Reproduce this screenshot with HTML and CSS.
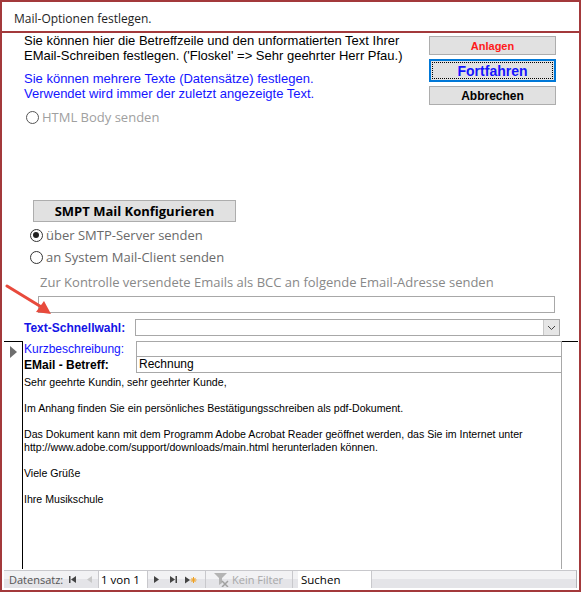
FILE: index.html
```html
<!DOCTYPE html>
<html lang="de">

<head>
    <meta charset="UTF-8">
    <title>Mail-Optionen festlegen.</title>
    <link rel="stylesheet" href="styles.css">
</head>

<body>
    <div class="window">
        <div class="titlebar">Mail-Optionen festlegen.</div>

        <div class="content">
            <div class="top">
                <div class="intro">
                    <p class="info">Sie können hier die Betreffzeile und den unformatierten Text Ihrer<br>EMail-Schreiben festlegen. ('Floskel' =&gt; Sehr geehrter Herr Pfau.)</p>
                    <p class="info blue">Sie können mehrere Texte (Datensätze) festlegen.<br>Verwendet wird immer der zuletzt angezeigte Text.</p>
                    <label class="radio light"><span class="dot"></span>HTML Body senden</label>
                </div>
                <div class="actions">
                    <button class="btn red">Anlagen</button>
                    <button class="btn focus">Fortfahren</button>
                    <button class="btn">Abbrechen</button>
                </div>
            </div>

            <button class="btn-smtp">SMPT Mail Konfigurieren</button>
            <label class="radio"><span class="dot checked"></span>über SMTP-Server senden</label>
            <label class="radio"><span class="dot"></span>an System Mail-Client senden</label>
            <div class="bcc-label">Zur Kontrolle versendete Emails als BCC an folgende Email-Adresse senden</div>
            <div class="bcc-input"></div>

            <div class="quick">
                <span class="quick-label">Text-Schnellwahl:</span>
                <div class="combo">
                    <span class="combo-btn">
                        <svg width="9" height="6" viewBox="0 0 9 6"><path d="M1 1 L4.5 4.5 L8 1" fill="none" stroke="#444" stroke-width="1"/></svg>
                    </span>
                </div>
            </div>
        </div>

        <div class="subform">
            <div class="selector"><span class="current"></span></div>
            <div class="detail">
                <div class="field">
                    <span class="field-label blue-label">Kurzbeschreibung:</span>
                    <div class="field-box"></div>
                </div>
                <div class="field joined">
                    <span class="field-label bold-label">EMail - Betreff:</span>
                    <div class="field-box">Rechnung</div>
                </div>
                <div class="mailtext">
                    <p>Sehr geehrte Kundin, sehr geehrter Kunde,</p>
                    <p>Im Anhang finden Sie ein persönliches Bestätigungsschreiben als pdf-Dokument.</p>
                    <p>Das Dokument kann mit dem Programm Adobe Acrobat Reader geöffnet werden, das Sie im Internet unter<br>http://www.adobe.com/support/downloads/main.html herunterladen können.</p>
                    <p>Viele Grüße</p>
                    <p>Ihre Musikschule</p>
                </div>
            </div>
            <div class="scroll-gap"></div>
        </div>

        <div class="navbar">
            <span class="nav-label">Datensatz:</span>
            <span class="nav-btn">
                <svg width="7" height="7" viewBox="0 0 7 7"><rect x="0" y="0" width="1.5" height="7" fill="#444"/><path d="M7 0 L2 3.5 L7 7 Z" fill="#444"/></svg>
            </span>
            <span class="nav-btn">
                <svg width="5" height="7" viewBox="0 0 5 7"><path d="M5 0 L0 3.5 L5 7 Z" fill="#c8c8c8"/></svg>
            </span>
            <span class="nav-pos">1 von 1</span>
            <span class="nav-btn">
                <svg width="5" height="7" viewBox="0 0 5 7"><path d="M0 0 L5 3.5 L0 7 Z" fill="#444"/></svg>
            </span>
            <span class="nav-btn">
                <svg width="7" height="7" viewBox="0 0 7 7"><path d="M0 0 L5 3.5 L0 7 Z" fill="#444"/><rect x="5.5" y="0" width="1.5" height="7" fill="#444"/></svg>
            </span>
            <span class="nav-btn wide">
                <svg width="12" height="8" viewBox="0 0 12 8"><path d="M0 0.5 L5 4 L0 7.5 Z" fill="#444"/><path d="M8.5 1 V7 M5.5 4 H11.5 M6.4 1.9 L10.6 6.1 M10.6 1.9 L6.4 6.1" stroke="#f0a020" stroke-width="1"/></svg>
            </span>
            <span class="nav-sep"></span>
            <span class="nav-filter">
                <svg width="15" height="14" viewBox="0 0 15 14"><path d="M0 0 H13 L8 5 V10 L5 12 V5 Z" fill="#b4b4b4"/><path d="M8 8 L14 14 M14 8 L8 14" stroke="#a0a0a0" stroke-width="1.5"/></svg>
                Kein Filter
            </span>
            <span class="nav-sep"></span>
            <span class="nav-search">Suchen</span>
        </div>

        <svg class="arrow" width="52" height="36" viewBox="0 0 52 36">
            <line x1="2" y1="3" x2="38" y2="25" stroke="#e84a3c" stroke-width="3" stroke-linecap="round"/>
            <path d="M46 31 L31 29 L39 18 Z" fill="#e84a3c"/>
        </svg>
    </div>
</body>

</html>
```

FILE: styles.css
```css
* {
    box-sizing: border-box;
    margin: 0;
    padding: 0;
}

body {
    margin: 0;
    background-color: #fff;
    font-family: "Liberation Sans", Arial, sans-serif;
}

.window {
    position: relative;
    width: 581px;
    height: 592px;
    border: 2px solid #a3393b;
    display: flex;
    flex-direction: column;
    background-color: #fff;
}

.titlebar {
    height: 31px;
    padding: 8px 0 0 12px;
    font-family: "Open Sans", sans-serif;
    font-size: 12px;
    color: #1e1e1e;
    border-bottom: 2px solid #a3393b;
}

.content {
    padding-left: 22px;
}

.top {
    display: flex;
    height: 167px;
}

.intro {
    flex: 1;
}

.info {
    font-size: 13px;
    line-height: 15px;
    color: #000;
}

.info.blue {
    color: #1414ff;
    margin-top: 8px;
}

.radio {
    display: flex;
    align-items: center;
    font-family: "Open Sans", sans-serif;
    font-size: 13px;
    color: #6a6a6a;
    height: 22px;
    margin-left: 6px;
}

.radio.light {
    color: #a0a0a0;
    margin-left: 2px;
    margin-top: 5px;
}

.dot {
    width: 13px;
    height: 13px;
    border: 1.5px solid #333;
    border-radius: 50%;
    margin-right: 3px;
    position: relative;
}

.radio.light .dot {
    border-color: #555;
}

.dot.checked::after {
    content: "";
    position: absolute;
    left: 2px;
    top: 2px;
    width: 6px;
    height: 6px;
    border-radius: 50%;
    background-color: #222;
}

.actions {
    width: 127px;
    margin-right: 23px;
    padding-top: 3px;
    display: flex;
    flex-direction: column;
    gap: 4px;
}

.btn {
    height: 19px;
    background-color: #e1e1e1;
    border: 1px solid #adadad;
    font-family: "Liberation Sans", Arial, sans-serif;
    font-weight: bold;
    font-size: 12px;
    color: #000;
}

.btn.red {
    color: #ff1a1a;
    font-size: 11px;
}

.btn.focus {
    height: 23px;
    border: 2px solid #0078d7;
    color: #1414ff;
    font-size: 14px;
    outline: 1px dotted #000;
    outline-offset: -4px;
}

.btn-smtp {
    display: block;
    width: 203px;
    height: 22px;
    margin-left: 9px;
    background-color: #e1e1e1;
    border: 1px solid #adadad;
    font-family: "Open Sans", sans-serif;
    font-weight: bold;
    font-size: 13px;
    color: #000;
}

.btn-smtp + .radio {
    margin-top: 2px;
}

.bcc-label {
    font-family: "Open Sans", sans-serif;
    font-size: 13px;
    color: #888;
    margin: 5px 0 0 16px;
    height: 23px;
}

.bcc-input {
    width: 517px;
    height: 17px;
    margin-left: 14px;
    border: 1px solid #a8a8a8;
}

.quick {
    display: flex;
    align-items: center;
    margin-top: 6px;
    height: 17px;
}

.quick-label {
    width: 111px;
    font-size: 12px;
    font-weight: bold;
    color: #1414e6;
}

.combo {
    width: 425px;
    height: 17px;
    border: 1px solid #a8a8a8;
    display: flex;
    justify-content: flex-end;
}

.combo-btn {
    width: 16px;
    height: 15px;
    background-color: #e6e6e6;
    border-left: 1px solid #c8c8c8;
    display: flex;
    align-items: center;
    justify-content: center;
}

.subform {
    display: flex;
    margin: 5px 0 0 2px;
    flex: 1;
}

.selector {
    width: 19px;
    border-top: 1px solid #000;
    border-right: 1px solid #000;
    padding: 4px 0 0 6px;
}

.current {
    display: block;
    width: 0;
    height: 0;
    border-top: 6px solid transparent;
    border-bottom: 6px solid transparent;
    border-left: 7px solid #6e6e6e;
}

.detail {
    flex: 0 0 539px;
    border-right: 1px solid #a8a8a8;
    padding-left: 1px;
}

.field {
    display: flex;
    height: 16px;
}

.field.joined {
    height: 17px;
    margin-top: -1px;
}

.field-label {
    width: 112px;
    font-size: 12px;
    line-height: 15px;
    padding-top: 1px;
}

.blue-label {
    color: #1414ff;
}

.bold-label {
    font-weight: bold;
    padding-top: 2px;
}

.field-box {
    flex: 1;
    border: 1px solid #a8a8a8;
    margin-right: -1px;
    font-size: 12px;
    line-height: 15px;
    padding-left: 2px;
}

.mailtext {
    padding-top: 3px;
    font-size: 10.6px;
    line-height: 13px;
    color: #000;
}

.mailtext p {
    margin-bottom: 13px;
}

.scroll-gap {
    width: 16px;
    border-top: 1px solid #000;
}

.navbar {
    display: flex;
    align-items: center;
    height: 18px;
    margin: 1px 2px 2px 2px;
    border-top: 1px solid #c8c8cc;
    border-right: 1px solid #b4b4b8;
    background: linear-gradient(#f2f2f4 0%, #f2f2f4 45%, #e4e4e8 45%, #e4e4e8 100%);
    font-family: "Open Sans", sans-serif;
    font-size: 11px;
    color: #555;
}

.nav-label {
    padding-left: 5px;
    width: 60px;
}

.nav-btn {
    display: flex;
    align-items: center;
    justify-content: center;
    width: 17px;
    height: 100%;
}

.nav-btn.wide {
    width: 18px;
}

.nav-pos {
    width: 50px;
    height: 17px;
    background-color: #fff;
    border-left: 1px solid #c8c8cc;
    border-right: 1px solid #c8c8cc;
    padding-left: 2px;
    color: #000;
    font-size: 11.5px;
    line-height: 17px;
}

.nav-sep {
    width: 1px;
    height: 100%;
    background-color: #c8c8cc;
    margin: 0 5px;
}

.nav-filter {
    display: flex;
    align-items: center;
    gap: 3px;
    color: #a8a8a8;
    width: 76px;
    padding-left: 3px;
}

.nav-search {
    width: 74px;
    height: 17px;
    background-color: #fff;
    border-right: 1px solid #c8c8cc;
    padding-left: 3px;
    color: #000;
    font-size: 11.5px;
    line-height: 17px;
}

.arrow {
    position: absolute;
    left: 3px;
    top: 281px;
}
```
